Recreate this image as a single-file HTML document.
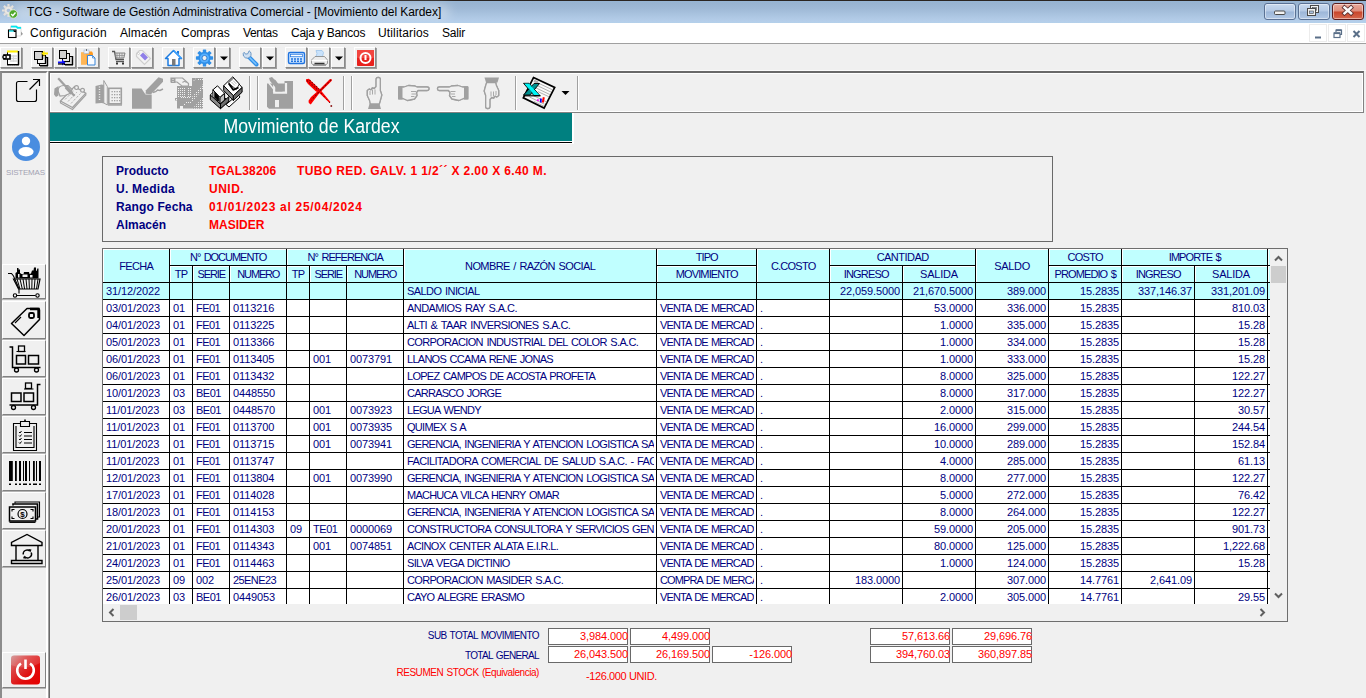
<!DOCTYPE html>
<html lang="es">
<head>
<meta charset="utf-8">
<title>TCG - Software de Gestión Administrativa Comercial - [Movimiento del Kardex]</title>
<style>
*{box-sizing:border-box;margin:0;padding:0}
html,body{width:1366px;height:698px;overflow:hidden;background:#f0f0f0;font-family:"Liberation Sans",sans-serif}
.abs,.abs>*{position:absolute}
#app{position:relative;width:1366px;height:698px;overflow:hidden;background:#f0f0f0}
#app>*{position:absolute}
/* title bar */
#title{left:0;top:0;width:1366px;height:23px;background:linear-gradient(#97b6d6 0,#98b3d0 8%,#9fb9d6 35%,#abc5e1 65%,#b5ceea 92%,#b3d0ea 100%);border-top:1px solid #2b2420}
#title .glow{position:absolute;left:14px;top:3px;width:436px;height:15px;background:#fff;opacity:.3;filter:blur(5px);border-radius:8px}
#title .txt{position:absolute;left:27px;top:4px;font-size:12px;line-height:14px;color:#000;white-space:nowrap}
.wb{position:absolute;top:2px;height:17px;width:32px;border:1px solid #5a7194;border-radius:3px;background:linear-gradient(#c8d9ee 0,#b4c9e5 48%,#9cb6d8 52%,#b3c9e6 100%);box-shadow:inset 0 0 0 1px rgba(255,255,255,.45)}
.wb.close{background:linear-gradient(#e9a99b 0,#dd8c7a 48%,#c8452a 52%,#d6694f 100%);border-color:#5a1d1d}
/* menu */
#menu{left:0;top:23px;width:1366px;height:20px;background:#fff}
#menu span{position:absolute;top:3px;font-size:12px;line-height:14px;color:#000;white-space:nowrap}
#menuline{left:0;top:43px;width:1366px;height:1px;background:#a0a0a0}
.mdi{position:absolute;top:1px;width:18px;height:18px;border:1px solid #ececec;background:#fff}
.mdi svg{position:absolute;left:0;top:0}
/* toolbar 1 */
.tb{position:absolute;top:47px;height:21px;width:22px;background:#f0f0f0;border:1px solid;border-color:#fff #8a8a8a #8a8a8a #fff;box-shadow:1px 1px 0 #a0a0a0}
.tb.dd{width:14px}
.tb svg{position:absolute;left:0;top:0}
/* frames */
#lp{left:0;top:71px;width:48px;height:640px;border:solid;border-width:2px 2px 0 2px;border-color:#828282 #fff #fff #8c8c8c}
#wl{left:0;top:70px;width:1366px;height:1px;background:#fbfbfb}
#vl{left:48px;top:71px;width:2px;height:640px;background:#696969;border-left:1px solid #a0a0a0}
#tf{left:50px;top:71px;width:1314px;height:42px;border:1px solid #828282;border-top:2px solid #696969;border-left:0;box-shadow:inset 1px 1px 0 #fff,inset -1px -1px 0 #fff}
#banner{left:50px;top:113px;width:522px;height:28px;background:#008080;box-shadow:0 1px 0 #fff,0 2px 0 #000,0 3px 0 #fff,2px 0 0 #fff,2px 3px 0 #fff;color:#fff;font-size:20px;line-height:28px;text-align:center;white-space:nowrap}
#banner span{display:inline-block;transform:scaleX(.885);transform-origin:50% 50%;position:relative;top:-1px}
#info{left:102px;top:156px;width:951px;height:86px;border:1px solid #696969}
#info b{position:absolute;font-size:12px;line-height:14px;white-space:nowrap;font-weight:bold}
#info .k{left:13px;color:#000080}
#info .v{left:106px;color:#f00}
#sis{left:6px;top:168px;width:40px;font-size:8px;line-height:10px;color:#a3a3b3;white-space:nowrap;letter-spacing:-.2px}
.lb{left:2px;width:44px;border:1px solid;border-color:#fff #828282 #828282 #fff;box-shadow:0 1px 0 #b4b4b4}
.lb svg{position:absolute;left:0;top:0}
/* grid */
#grid{left:102px;top:248px;width:1186px;height:374px;border:1px solid #6e6e6e;background:#f0f0f0}
#gv{position:absolute;left:0;top:0;width:1167px;height:355px;overflow:hidden;background:#fff}
#vs{position:absolute;left:1167px;top:0;width:17px;height:355px;background:#f0f0f0}
#hs{position:absolute;left:0;top:355px;width:1167px;height:17px;background:#f0f0f0}
#vs svg,#hs svg{position:absolute;left:0;top:0}
.row{position:absolute;left:0;width:1167px;height:17px}
.row.first .c{background:#c0ffff}
.c{position:absolute;top:0;height:17px;border-right:1px solid #000;border-bottom:1px solid #000;font-size:11px;line-height:16px;color:#000080;white-space:nowrap;overflow:hidden;padding:0 3px 0 3px;word-spacing:1.2px}
.c.l::after{content:"";position:absolute;right:0;top:0;width:2px;height:16px;background:#fff}
.row.first .c.l::after{background:#c0ffff}
.c.r{text-align:right;padding:0 2px 0 0}
.c.x{border-right:0;padding:0}
.h{position:absolute;background:#c0ffff;border-right:1px solid #000;border-bottom:1px solid #000;box-shadow:inset 1px 1px 0 #fff;font-size:11px;color:#000080;text-align:center;white-space:nowrap;overflow:hidden;word-spacing:1.2px}
.tl{width:159px;text-align:right;font-size:10px;line-height:12px;white-space:nowrap;word-spacing:1px}
.tv{width:80px;height:17px;box-shadow:inset 0 0 0 1px #696969;background:#fff;color:#f00;font-size:11px;line-height:14px;text-align:right;padding:1px 0 1px 1px;white-space:nowrap;letter-spacing:-.1px}
</style>
</head>
<body>
<div id="app">
<!-- ===== title bar ===== -->
<div id="title"><div class="glow"></div>
<svg style="position:absolute;left:2px;top:2px" width="17" height="18" viewBox="0 0 17 18">
<g fill="#e9e6e2" stroke="#c9c5c0" stroke-width=".6">
<circle cx="6.5" cy="7.5" r="4.2"/>
<g stroke="#e4e0dc" stroke-width="2.2" stroke-linecap="butt">
<path d="M6.5 1v2.6M6.5 11.4V14M0 7.5h2.6M10.4 7.5H13M1.9 2.9l1.9 1.9M9.2 10.2l1.9 1.9M1.9 12.1l1.9-1.9M9.2 4.8l1.9-1.9"/>
</g>
</g>
<circle cx="6.5" cy="7.5" r="1.8" fill="#a9bfdc"/>
<circle cx="11.300" cy="11" r="4.200" fill="#4ea82a" stroke="#e8f3e0" stroke-width=".700"/>
<path d="M9.200 11.100l1.600 1.700 2.700-3.300" fill="none" stroke="#fff" stroke-width="1.4"/>
</svg>
<div class="txt" style="letter-spacing:-.07px">TCG - Software de Gestión Administrativa Comercial - [Movimiento del Kardex]</div>
<div class="wb" style="left:1264px"><svg width="30" height="15"><rect x="9.500" y="7" width="10.500" height="3.500" rx="1" fill="#f2f2f2" stroke="#4a4a4a"/></svg></div>
<div class="wb" style="left:1298px"><svg width="30" height="15"><rect x="11.500" y="1.500" width="8" height="7" fill="#f2f2f2" stroke="#4a4a4a"/><rect x="13.500" y="3.500" width="4" height="3" fill="#a9c0de" stroke="#4a4a4a" stroke-width=".600"/><rect x="8.500" y="4.500" width="8" height="7" fill="#f2f2f2" stroke="#4a4a4a"/><rect x="10.500" y="7" width="4" height="2.500" fill="#a9c0de" stroke="#4a4a4a" stroke-width=".600"/></svg></div>
<div class="wb close" style="left:1332px"><svg width="30" height="15"><path d="M11.500 3.500l6.500 5.800M18 3.500l-6.500 5.800" stroke="#5a3030" stroke-width="4.200" stroke-linecap="square"/><path d="M11.500 3.500l6.500 5.800M18 3.500l-6.500 5.800" stroke="#fafafa" stroke-width="2.500" stroke-linecap="square"/></svg></div>
</div>
<!-- ===== menu bar ===== -->
<div id="menu">
<svg style="position:absolute;left:7px;top:2px" width="18" height="14" viewBox="0 0 18 14">
<path d="M3.500 1h6l1 1h3.500v9H3.500z" fill="#fff" stroke="#d4d4d4" stroke-width=".800"/>
<path d="M4 1.700h5.500l1 1.200h3.500" fill="none" stroke="#00e8f0" stroke-width="1.700"/>
<path d="M14 6.500l2 2.500-2 1.500z" fill="#9a9a9a"/>
<rect x="1.500" y="5" width="7.500" height="7.500" fill="#fff" stroke="#000" stroke-width="1.100"/>
<path d="M2 6h5" stroke="#00dce8" stroke-width="1.300"/><path d="M7 5v1.500h2" fill="none" stroke="#000" stroke-width="1"/>
</svg>
<span style="left:30px;letter-spacing:.21px">Configuración</span>
<span style="left:120px;letter-spacing:.1px">Almacén</span>
<span style="left:181px">Compras</span>
<span style="left:243px;letter-spacing:-.35px">Ventas</span>
<span style="left:291px;letter-spacing:-.24px">Caja y Bancos</span>
<span style="left:378px;letter-spacing:.15px">Utilitarios</span>
<span style="left:442px;letter-spacing:-.2px">Salir</span>
<div class="mdi" style="left:1309px"><svg width="17" height="17"><path d="M5 12.5h6" stroke="#5a6f88" stroke-width="2"/></svg></div>
<div class="mdi" style="left:1328px"><svg width="17" height="17"><path d="M7 7V5h5.5v4.5H11" fill="none" stroke="#5a6f88" stroke-width="1.2"/><path d="M7 5.2h5.5" stroke="#5a6f88" stroke-width="1.8"/><rect x="5" y="8" width="6" height="4.5" fill="none" stroke="#5a6f88" stroke-width="1.2"/><path d="M5 8.2h6" stroke="#5a6f88" stroke-width="1.8"/></svg></div>
<div class="mdi" style="left:1347px"><svg width="17" height="17"><path d="M5.5 6l6 6M11.5 6l-6 6" stroke="#5a6f88" stroke-width="2"/></svg></div>
</div>
<div id="menuline"></div>
<!-- ===== toolbar 1 ===== -->
<div class="tb" style="left:0px"><svg width="21" height="20" viewBox="0 0 21 20">
<rect x="6.5" y="3.5" width="11" height="13" fill="#fff" stroke="#000"/><path d="M6 3.5h11" stroke="#ffee00" stroke-width="2"/><path d="M17.5 3v14M7 16.8h11" stroke="#000" stroke-width="1.4"/>
<path d="M9 8h7M9 10.5h7M9 13h7" stroke="#d8d8d8" stroke-width="1.4"/><path d="M12.5 7v7" stroke="#d8d8d8"/>
<rect x="3" y="7" width="6" height="4" fill="#fff" stroke="#000" stroke-width="1.6"/><circle cx="3.6" cy="9" r="1.7" fill="#fff" stroke="#000" stroke-width="1.3"/>
<path d="M6 17.5h10" stroke="#888" stroke-dasharray="1 1"/></svg></div>
<div class="tb" style="left:31px"><svg width="21" height="20" viewBox="0 0 21 20">
<rect x="7.5" y="9.5" width="8" height="8" fill="#e8e8e8" stroke="#000"/><rect x="5.5" y="7.5" width="8" height="8" fill="#f4f4f4" stroke="#000"/><rect x="2.5" y="3.5" width="8" height="8" fill="#d4d4d4" stroke="#000"/>
<path d="M15.5 9v9M8 17.8h8M13.5 8v7.5M10.5 4v7" stroke="#000" stroke-width="1.4"/>
<path d="M16 5.5h-5" stroke="#ffe800" stroke-width="2"/><path d="M12.5 2.5l-3 3 3 3z" fill="#ffe800"/></svg></div>
<div class="tb" style="left:54px"><svg width="21" height="20" viewBox="0 0 21 20">
<rect x="9.5" y="8.5" width="8" height="8" fill="#d8d8d8" stroke="#000"/><rect x="7.5" y="5.5" width="7" height="8" fill="#e8e8e8" stroke="#000"/><rect x="4.500" y="2.500" width="7" height="8" fill="#cfcfcf" stroke="#000"/>
<path d="M17.5 8v9M10 16.800h8" stroke="#000" stroke-width="1.400"/>
<path d="M3 14.500h5" stroke="#1010ff" stroke-width="2"/><path d="M7 11.500l3.500 3-3.500 3z" fill="#1010ff"/><path d="M3 16h6" stroke="#000" stroke-width="1.200"/></svg></div>
<div class="tb" style="left:77px"><svg width="21" height="20" viewBox="0 0 21 20">
<path d="M3 4.500h11v12H3z" fill="#ffa83a"/><path d="M3 4.500h5v12H3z" fill="#ffb656"/><path d="M11 3.500h3l1 2v2h-4z" fill="#ff9a1f"/>
<rect x="6" y="2" width="5" height="3.500" fill="#eef3fb" stroke="#9fb6d8" stroke-width=".600"/><path d="M8.500 1v2" stroke="#777"/>
<path d="M9.500 7.500h5l2.500 2.500v7h-7.500z" fill="#fafcff" stroke="#3a86d8"/><path d="M14.500 7.500v2.500h2.500" fill="none" stroke="#3a86d8" stroke-width=".800"/></svg></div>
<div class="tb" style="left:108px"><svg width="21" height="20" viewBox="0 0 21 20">
<path d="M3 3.500h2.500l1.500 8h8" fill="none" stroke="#555" stroke-width="1.300"/><path d="M6 5h10l-1.200 5H7z" fill="#e2e2e2" stroke="#777" stroke-width=".900"/>
<path d="M8 5v5M10.500 5v5M13 5v5M6.500 7.500h9" stroke="#8a8a8a" stroke-width=".700"/><path d="M7 13.500h8" stroke="#555" stroke-width="1.300"/>
<rect x="7" y="14.500" width="2" height="2" fill="#333"/><rect x="13" y="14.500" width="2" height="2" fill="#333"/></svg></div>
<div class="tb" style="left:131px"><svg width="21" height="20" viewBox="0 0 21 20">
<path d="M4.500 5.500l3-3h3l8 8-6 6-8-8z" fill="#f4f4f4" stroke="#cfcfcf" stroke-width="1.200"/><path d="M8 7.500l3-3 5 5-3 3z" fill="#8f7fe8"/><circle cx="6.500" cy="5.500" r="1" fill="#fff" stroke="#bbb" stroke-width=".600"/></svg></div>
<div class="tb" style="left:162px"><svg width="21" height="20" viewBox="0 0 21 20">
<path d="M10.500 2.500l8 8h-2.500v7h-11v-7H2.500z" fill="#fdfdff" stroke="#1c7be0" stroke-width="1.500" stroke-linejoin="round"/><path d="M14 3h2v3.500l-2-2z" fill="#1c7be0"/>
<rect x="9" y="11" width="3.500" height="6.500" fill="#7a7a7a"/><path d="M10.500 2.500l8 8" stroke="#3aa0ff" stroke-width="1.500"/></svg></div>
<div class="tb" style="left:193px"><svg width="21" height="20" viewBox="0 0 21 20">
<g transform="translate(10.500 10)"><g fill="#2f8fe8"><circle r="6.200"/><g id="gt"><rect x="-1.700" y="-8.600" width="3.400" height="3.400" rx=".6"/><rect x="-1.700" y="5.200" width="3.400" height="3.400" rx=".6"/></g><use href="#gt" transform="rotate(45)"/><use href="#gt" transform="rotate(90)"/><use href="#gt" transform="rotate(135)"/></g>
<circle r="4.600" fill="#57b0ff"/><circle r="2.500" fill="#f0f0f0" stroke="#1f6fc8" stroke-width=".800"/></g></svg></div>
<div class="tb dd" style="left:216px"><svg width="13" height="20"><path d="M3 8.500h8l-4 4z" fill="#000"/></svg></div>
<div class="tb" style="left:239px"><svg width="21" height="20" viewBox="0 0 21 20">
<path d="M8 8l8.500 8.500" stroke="#2f8fe8" stroke-width="4" stroke-linecap="round"/><path d="M8.500 8.500l7.500 7.500" stroke="#7cc4ff" stroke-width="1.500" stroke-linecap="round"/>
<path d="M3.200 5.500a4 4 0 0 0 6.800 3.500a4 4 0 0 0-.8-6.200l-1.500 3-2.200.3-1.300-1.800z" fill="#cfe0f2" stroke="#5f8fc0" stroke-width=".900"/></svg></div>
<div class="tb dd" style="left:262px"><svg width="13" height="20"><path d="M3 8.500h8l-4 4z" fill="#000"/></svg></div>
<div class="tb" style="left:285px"><svg width="21" height="20" viewBox="0 0 21 20">
<rect x="2.500" y="4.500" width="16" height="11" rx="1.500" fill="#cfe6ff" stroke="#1f73e0" stroke-width="1.400"/><rect x="4.500" y="6.300" width="12" height="2.400" fill="#fff" stroke="#1f73e0" stroke-width=".700"/>
<path d="M5 11h11M5 13.300h11" stroke="#1f73e0" stroke-width="1.500" stroke-dasharray="2 1"/></svg></div>
<div class="tb" style="left:308px"><svg width="21" height="20" viewBox="0 0 21 20">
<path d="M7 2.500h6l1.500 2-1.500 6H6.500l1.500-5z" fill="#c9e2fb" stroke="#9cc3ea" stroke-width=".800"/>
<path d="M2.500 12l3.500-3.500h9.500l3 3.500v3.500l-2 1.500h-12l-2-1.500z" fill="#ececec" stroke="#8c8c8c" stroke-width=".900"/><path d="M2.500 12.500h16" stroke="#fff" stroke-width="1.200"/>
<path d="M5.500 15.500h10" stroke="#333" stroke-width="1.500"/><path d="M4 17l13 0" stroke="#777" stroke-width="1"/></svg></div>
<div class="tb dd" style="left:331px"><svg width="13" height="20"><path d="M3 8.500h8l-4 4z" fill="#000"/></svg></div>
<div class="tb" style="left:354px"><svg width="21" height="20" viewBox="0 0 21 20">
<rect x="2" y="2" width="17" height="16" rx="1" fill="#e8211d"/><rect x="2" y="2" width="17" height="8" rx="1" fill="#f2453f"/>
<circle cx="10.500" cy="10" r="5" fill="none" stroke="#fff" stroke-width="2"/><path d="M10.500 7v5" stroke="#fff" stroke-width="2"/></svg></div>
<!-- ===== frames ===== -->
<div id="wl"></div><div id="lp"></div><div id="vl"></div>
<div id="tf"></div>
<div id="banner"><span>Movimiento de Kardex</span></div>
<!-- ===== info box ===== -->
<div id="info">
<b class="k" style="top:7px">Producto</b><b class="v" style="top:7px;letter-spacing:.15px">TGAL38206</b><b class="v" style="top:7px;left:194px;letter-spacing:.38px">TUBO RED. GALV. 1 1/2´´ X 2.00 X 6.40 M.</b>
<b class="k" style="top:25px;letter-spacing:.25px">U. Medida</b><b class="v" style="top:25px;letter-spacing:.5px">UNID.</b>
<b class="k" style="top:43px;letter-spacing:.12px">Rango Fecha</b><b class="v" style="top:43px;letter-spacing:.7px">01/01/2023 al 25/04/2024</b>
<b class="k" style="top:61px">Almacén</b><b class="v" style="top:61px">MASIDER</b>
</div>
<!-- ===== left panel ===== -->
<svg style="left:14px;top:77px" width="28" height="28" viewBox="0 0 28 28"><path d="M13.500 4.500H4.500q-2 0-2 2v16q0 2 2 2h16q2 0 2-2v-10" fill="none" stroke="#000" stroke-width="1.150"/><path d="M15.500 12.500l10-10M19 2.500h6.500v6.500" fill="none" stroke="#000" stroke-width="1.150"/></svg>
<svg style="left:11px;top:132px" width="30" height="30" viewBox="0 0 30 30"><circle cx="15" cy="15" r="14" fill="#4a8de0"/><circle cx="15" cy="9" r="4.200" fill="#fff"/><ellipse cx="15" cy="19.700" rx="7.600" ry="4.700" fill="#fff"/></svg>
<div id="sis">SISTEMAS</div>
<div class="lb" style="top:264px;height:35px"><svg width="42" height="33" viewBox="0 0 42 33">
<g fill="none" stroke="#000" stroke-width="1.100"><path d="M5 8.500h3.500l2 2.500 5.500 12.500"/><path d="M10.500 14h26.500l-2 10h-19.500z" stroke-width="1.200"/>
<path d="M14 14l3 10M17 14l2.300 10M20 14l1.600 10M23 14l1 10M26 14l.4 10M29 14l-.2 10M32 14l-.8 10M35 14l-1.500 10" stroke-width="1"/>
<path d="M16 23.500v5M13.500 30.500h19"/><circle cx="12" cy="30.500" r="1.700"/><circle cx="34.500" cy="30.500" r="1.700"/></g>
<path d="M12.500 13.500V8l1.500-1V3h1.500v1.500h1.500V8l1.500 1h2l.5-2h5l.5 2 1.500-.5 1-3h1.500l.5-3H33v3l.8.500.5-2.500h1.200v10z" fill="#000"/><path d="M19.500 9.500h5v2.500h-5zM27 10h2.500v2.500H27zM15 9h1.500v3.500H15z" fill="#f0f0f0"/></svg></div>
<div class="lb" style="top:301px;height:38px"><svg width="42" height="36" viewBox="0 0 42 36">
<g fill="none" stroke="#000" stroke-width="1.500" stroke-linejoin="round"><path d="M8.500 21.500L24 6.500h11.500l1 1.500v9.500L21 33.500z"/><rect x="26" y="11" width="5" height="5" rx="1.500" stroke-width="1.800"/><path d="M12 21l6-6" stroke-width="1.100"/></g><path d="M27 7h8.500v9" fill="none" stroke="#000" stroke-width="2.400"/></svg></div>
<div class="lb" style="top:340px;height:37px"><svg width="42" height="35" viewBox="0 0 42 35">
<g fill="none" stroke="#000" stroke-width="1.500"><path d="M6.500 6h3v20.500h28"/><rect x="13.500" y="14.500" width="9" height="8.500"/><rect x="25.500" y="14.500" width="10" height="8.500"/><rect x="15.500" y="5" width="6" height="5.500" stroke-width="1.300"/><path d="M13.500 10.500h9" stroke-width="1"/>
<circle cx="13.500" cy="29" r="2" stroke-width="1.300"/><circle cx="33.500" cy="29" r="2" stroke-width="1.300"/></g></svg></div>
<div class="lb" style="top:378px;height:37px"><svg width="42" height="35" viewBox="0 0 42 35">
<g fill="none" stroke="#000" stroke-width="1.500"><path d="M37.500 5.500h-3v20.500h-28"/><rect x="8.500" y="14" width="9.500" height="8.500"/><rect x="21" y="14" width="9.500" height="8.500"/><rect x="22.500" y="4" width="6" height="5.500" stroke-width="1.300"/><path d="M21 10h9.500" stroke-width="1"/>
<circle cx="10.500" cy="28.500" r="2" stroke-width="1.300"/><circle cx="30.500" cy="28.500" r="2" stroke-width="1.300"/></g></svg></div>
<div class="lb" style="top:416px;height:37px"><svg width="42" height="35" viewBox="0 0 42 35">
<g fill="none" stroke="#000" stroke-width="1.100"><path d="M17 6.500h-6.500v27h23v-27H27"/><path d="M13 9v21.500h18V9"/><path d="M17.500 4.500h9v5h-9z"/><path d="M22 2.500v2.500" stroke-width="1.600"/>
<path d="M21 15.500h8M21 19h8M21 22.500h8M21 26h8" stroke-width="1.200"/><path d="M16 15l1 1 1.500-2M16 18.500l1 1 1.500-2M16 22l1 1 1.500-2M16 25.500l1 1 1.500-2" stroke-width="1"/></g></svg></div>
<div class="lb" style="top:454px;height:37px"><svg width="42" height="35" viewBox="0 0 42 35">
<g fill="#000"><rect x="6" y="6" width="3.800" height="20"/><rect x="12" y="6" width="1.800" height="20"/><rect x="16" y="6" width="2" height="20"/><rect x="20" y="6" width="1" height="20"/><rect x="22" y="6" width="2" height="20"/><rect x="26" y="6" width="1" height="20"/><rect x="30" y="6" width="1.800" height="20"/><rect x="33" y="6" width="1" height="20"/><rect x="36" y="6" width="2" height="20"/>
<rect x="6" y="28.500" width="2" height="1.500"/><rect x="12" y="28.500" width="2" height="1.500"/><rect x="16" y="28.500" width="2" height="1.500"/><rect x="20" y="28.500" width="4" height="1.500"/><rect x="26" y="28.500" width="2" height="1.500"/><rect x="30" y="28.500" width="4" height="1.500"/><rect x="36" y="28.500" width="2" height="1.500"/></g></svg></div>
<div class="lb" style="top:492px;height:37px"><svg width="42" height="35" viewBox="0 0 42 35">
<g fill="none" stroke="#000"><path d="M12 10.500V9h24.500v15H35" stroke-width="1.100"/><path d="M10 12.500V11h24.500v15H33" stroke-width="1.600"/><rect x="6.500" y="14" width="26" height="14" stroke-width="1.500"/><path d="M6.500 29.300h26" stroke-width="1.300"/>
<circle cx="19.500" cy="21" r="4.500" stroke-width="1.200"/><path d="M9 18.500v-2h2.500M27.500 16.500H30v2M30 23.500v2h-2.500M11.500 25.500H9v-2" stroke-width="1.100"/></g>
<text x="19.500" y="24" font-size="8" font-weight="bold" text-anchor="middle" font-family="Liberation Sans,sans-serif" fill="#000">$</text></svg></div>
<div class="lb" style="top:530px;height:37px"><svg width="42" height="35" viewBox="0 0 42 35">
<g fill="none" stroke="#000" stroke-width="1.400" stroke-linejoin="miter"><path d="M8.500 14.500v-3L24 3.500l15 8v3z"/><path d="M13 15v14M35 15v14"/><path d="M8.500 29.500h30.500v3H8.500z"/>
<path d="M20.200 23.500a4 4 0 0 1 6.500-3.600" stroke-width="1.400"/><path d="M28.300 21.500a4 4 0 0 1-6.500 4.300" stroke-width="1.400"/></g><path d="M25.300 18l3.200.4-1.200 3z" fill="#000"/><path d="M23.200 27.800l-3.200-.5 1.300-2.900z" fill="#000"/></svg></div>
<div class="lb" style="top:652px;height:36px"><svg width="42" height="34" viewBox="0 0 42 34">
<defs><linearGradient id="pg" x1="0" y1="0" x2="1" y2="1"><stop offset="0" stop-color="#cf8f8f"/><stop offset=".3" stop-color="#dc4040"/><stop offset=".65" stop-color="#e00c0c"/><stop offset="1" stop-color="#e60000"/></linearGradient></defs>
<g transform="translate(-1 0)"><rect x="9" y="2.500" width="29" height="29" rx="3" fill="url(#pg)"/><path d="M9 12q14 6 29-2v-5q0-2.500-3-2.500H12q-3 0-3 2.500z" fill="#fff" opacity=".13"/>
<path d="M19 10.500a8.300 8.300 0 1 0 9 0" fill="none" stroke="#fff" stroke-width="2.600"/><path d="M23.500 6.500v9.500" stroke="#fff" stroke-width="2.600"/></g></svg></div>
<!-- ===== toolbar 2 icons ===== -->
<svg id="t2" style="left:50px;top:73px" width="540" height="39" viewBox="50 73 540 39">
<defs>
<pattern id="dots" width="2" height="2" patternUnits="userSpaceOnUse"><rect width="2" height="2" fill="#a0a0a0"/><rect width="1" height="1" fill="#f0f0f0"/></pattern>
<pattern id="hat" width="3" height="3" patternUnits="userSpaceOnUse"><rect width="3" height="3" fill="#f0f0f0"/><path d="M0 3L3 0M-1 1L1-1M2 4l2-2" stroke="#a0a0a0" stroke-width="1"/></pattern>
</defs>
<!-- 1 notepad + hand -->
<g stroke="#a0a0a0" fill="#f0f0f0" stroke-width="1.200">
<path d="M60.500 101L74.500 86.500 85.800 93.200 72.500 107.500z"/><path d="M60.500 101v2l12 6.500 13.300-14.500v-1.800" fill="none"/>
<path d="M65 99.500l9-9M68 101.500l9-9.500M71 103.500l9.500-10" stroke-width=".800" stroke-dasharray="2.500 1.500"/>
<circle cx="76.500" cy="87.600" r="1.900"/><circle cx="82.500" cy="90.300" r="1.900"/>
<path d="M58 91c0-4 3-5.500 6-5.500h4l4 4-1 3.500-6 2.500-5 .5z"/>
</g>
<path d="M54.500 88.500l4-2.500v9.500l-2.500 1.500-2-2.500z" fill="#a0a0a0"/>
<path d="M58.200 78.200L74.500 96" stroke="#a0a0a0" stroke-width="2.200"/><path d="M66 87l6 6.500" stroke="#a0a0a0" stroke-width="3.400"/>
<!-- 2 book -->
<g>
<path d="M95.500 86l6-1.500 5 1v18.500l-5-1-6 .5z" fill="#a0a0a0"/><path d="M99.500 86.500v15" stroke="#f0f0f0" stroke-width="1.400" stroke-dasharray="1 1.500"/>
<path d="M103.800 80.500l3.500 6v18.500l-3.500-2z" fill="#f0f0f0" stroke="#a0a0a0" stroke-width="1"/>
<rect x="108.800" y="88.300" width="12.500" height="15.500" fill="#f0f0f0" stroke="#a0a0a0" stroke-width="1.600"/><path d="M108 105h14" stroke="#a0a0a0" stroke-width="1.400"/>
<g fill="#a0a0a0"><rect x="111.500" y="91" width="1.300" height="1.300"/><rect x="114" y="91" width="1.300" height="1.300"/><rect x="116.500" y="91" width="1.300" height="1.300"/><rect x="119" y="91" width="1.300" height="1.300"/>
<rect x="111.500" y="94" width="1.300" height="1.300"/><rect x="114" y="94" width="1.300" height="1.300"/><rect x="116.500" y="94" width="1.300" height="1.300"/><rect x="119" y="94" width="1.300" height="1.300"/>
<rect x="111.500" y="97" width="1.300" height="1.300"/><rect x="114" y="97" width="1.300" height="1.300"/><rect x="116.500" y="97" width="1.300" height="1.300"/><rect x="119" y="97" width="1.300" height="1.300"/>
<rect x="111.500" y="100" width="1.300" height="1.300"/><rect x="114" y="100" width="1.300" height="1.300"/><rect x="116.500" y="100" width="1.300" height="1.300"/><rect x="119" y="100" width="1.300" height="1.300"/></g>
</g>
<!-- 3 square + pen -->
<path d="M132 88.500h9.500l4 6h6.200v14.200H132z" fill="#a0a0a0"/><path d="M158.500 77.300l4.500 1.500v3l-12 12.500-5.500-.5.500-3.500z" fill="#a0a0a0"/><path d="M153 92.500l3-1 1.500-1.500 2.500.5 3-1.500" fill="none" stroke="#a0a0a0" stroke-width="1.400"/>
<!-- 4 bin + hand -->
<path d="M171 78h11.500l6 5.500v2.500h-6.500l-5-4h-6z" fill="#f0f0f0" stroke="#a0a0a0" stroke-width="1.200"/><path d="M171 78h4.500v5H171z" fill="#a0a0a0"/><rect x="172.500" y="79" width="1" height="1" fill="#f0f0f0"/><rect x="172.500" y="81" width="1" height="1" fill="#f0f0f0"/>
<path d="M182.500 82.500q2-2 4 0" fill="none" stroke="#a0a0a0" stroke-width="1.100"/>
<path d="M177 86h15v22.500h-9v-2.500h-3v2.500h-3v-8h-2v-2.500h2z" fill="#a0a0a0"/>
<rect x="178" y="87" width="13" height="10" fill="url(#dots)"/><path d="M181.500 87v10M186.500 87v10" stroke="#a0a0a0"/>
<path d="M181 97.500h9M186 102.500h5" stroke="#f0f0f0" stroke-width="1" stroke-dasharray="1 1"/><rect x="176" y="99" width="1" height="1" fill="#f0f0f0"/><rect x="184" y="104" width="1" height="1" fill="#f0f0f0"/>
<path d="M192 78h11v30.500h-11z" fill="#a0a0a0"/>
<path d="M192 97l11-13v5L192 102z" fill="url(#dots)"/><path d="M203 97.500v11h-10.500z" fill="url(#dots)"/>
<path d="M193.500 81l2-2M198 79.500h5" stroke="#f0f0f0" stroke-width="1" stroke-dasharray="1 1"/>
<!-- 5 computer + printer -->
<g stroke="#000" stroke-width="1" stroke-linejoin="round">
<path d="M226 104.500l3 2.500 11-10-2-2.500z" fill="#fff"/>
<path d="M232.800 76.800l9.300 10.700-8.800 8.200-9.600-10z" fill="#fff"/>
<path d="M223.700 85.700l9.600 10v4.800l-9.600-10z" fill="#8a8a8a"/><path d="M233.300 95.700l8.800-8.200v4.700l-8.800 8.300z" fill="#6e6e6e"/>
<path d="M228.300 83l5.200-5 5.800 6-3 5.500z" fill="#fff" stroke-width=".800"/><path d="M228.800 83.500l4.400 6.300 5.300-2.300" fill="none" stroke-width="1.900"/>
<path d="M231.500 82l3.500 3.600M233 80.500l3.500 3.600" stroke="#9a9a9a" stroke-width=".700"/>
<path d="M210.300 95l4.500-4.500 14 10.500-8.300 7.500z" fill="#fff"/>
<path d="M210.300 95l10.200 9v4.700l-10.200-9z" fill="#8a8a8a"/><path d="M220.500 104l8.300-7.300v4.500l-8.300 7.500z" fill="#6e6e6e"/>
<path d="M217.500 85.800l7.100 7.500-4.600 4.200-7.100-7.700z" fill="#fff"/>
<path d="M212.900 89.800l7.100 7.700v6.500l-7.100-7.500z" fill="#fff"/><path d="M214.800 92.300l3.600 4v5l-3.600-4z" fill="#000"/>
<path d="M220 97.500l4.600-4.200v6.700l-4.600 4z" fill="#bdbdbd"/>
</g>
<!-- separators -->
<g><path d="M249.500 76v34M257.500 76v34M343.500 76v34M351.500 76v34M515.500 76v34M577.500 76v34" stroke="#a0a0a0"/><path d="M250.500 76v34M258.500 76v34M344.500 76v34M352.500 76v34M516.500 76v34M578.500 76v34" stroke="#fff"/></g>
<!-- 6 floppy -->
<path d="M267 83.500h17.500V81H293v27.700h-24l-2-2z" fill="#a0a0a0"/>
<path d="M274.200 84v8.600h11.800V83" fill="none" stroke="#f0f0f0" stroke-width="2.200"/>
<path d="M269 78l3-1 2.500 2.500 1 .5 7 9.500v2h-7l.5-3.500-6-7z" fill="#a0a0a0"/><path d="M268.800 83l5.200 6.500-.5 2.500" fill="none" stroke="#f0f0f0" stroke-width="1.300"/>
<rect x="275" y="100" width="4" height="7.200" fill="#f0f0f0"/>
<!-- 7 red X -->
<path d="M306 79.200l2.800-.4 11.500 11 10.200 12.200-1.200.8-10.500-10.300-2.800-1-8-7.500-2-2.800z" fill="#f00"/>
<path d="M307 80.500l13 11.500M309.500 80l10.500 10" stroke="#800000" stroke-width="1.100" stroke-dasharray="1.500 1.500"/>
<path d="M331.800 79.200l-1.800-.2-10.500 10.500-8.500 7.500-2.500 3.800.3 2.200 2 1.600 2.200-3.100 6.500-8.500 12.300-12.300z" fill="#f00"/>
<path d="M331 79.800l-11 11-9 9.500" stroke="#800000" stroke-width="1.100" stroke-dasharray="1.500 2"/>
<path d="M321 93l9 10" stroke="#800000" stroke-width="1" stroke-dasharray="1.500 2.500"/>
<rect x="330.500" y="105.200" width="1.600" height="1.600" fill="#800000"/>
<!-- hands -->
<g fill="#f0f0f0" stroke="#a0a0a0" stroke-width="1.300" stroke-linejoin="round" style="filter:drop-shadow(.8px .8px 0 #a0a0a0)">
<path d="M378.500 77.500q1.800 0 1.800 2v11l1.500 4.500-1.500 5.500-1 3.500h-9l-.5-3-2.500-5.500v-5l2-1.500 1.500 1 1.500-2 2 .5 1.800-2V79.500q0-2 1.900-2z"/><path d="M370 91v4M372.500 89.500v5M375 89.500v5" stroke-width=".900"/>
<path d="M429 88.700q0 1.800-2 1.800h-9l-1.500 2 .5 3-2.500 3.500-7 1.500-4.500-2h-4V87h5l4.500-1.500 6.500.5 2 1h10q2 0 2 1.700z"/><path d="M411 91.500h5M411.500 94h4.500M411 96.500h3.500" stroke-width=".900"/>
<path d="M437.500 88.700q0 1.800 2 1.800h9l1.500 2-.5 3 2.500 3.500 7 1.500 4.500-2h4V87h-5L458 85.500l-6.500.5-2 1h-10q-2 0-2 1.700z"/><path d="M455.500 91.500h-5M455 94h-4.500M455.500 96.500H452" stroke-width=".900"/>
<path d="M487.500 108.500q-1.800 0-1.800-2v-11l-1.500-4.500 1.500-5.500 1-3h9l.5 2.500 2.500 5.500v5l-2 1.500-1.500-1-1.500 2-2-.5-1.800 2v7q0 2-1.900 2z"/><path d="M496 95v-4M493.500 96.500v-5M491 96.500v-5" stroke-width=".900"/>
</g>
<path d="M369.500 104h10l1.500 5h-13z" fill="#a0a0a0"/><path d="M398 86.500h4.500v13H398z" fill="#a0a0a0"/><path d="M464 86.500h4.500v13H464z" fill="#a0a0a0"/><path d="M484.500 77.500h14.500l-1.500 5h-11.500z" fill="#a0a0a0"/>
<!-- excel -->
<g>
<path d="M533.500 77.500l21.200 10-10.600 20.600-20.800-10.300z" fill="#fafafa" stroke="#000" stroke-width="1.700" stroke-linejoin="miter"/>
<path d="M536 82l16 7.600M535 84.500l16 7.600M534 87l16 7.600M538 91.600l11 5.200M531 94.500l16 7.600M529.500 97l15 7.200M534 101.500l10 4.800" stroke="#a8a8a8" stroke-width=".900"/>
<path d="M534.500 79.500l4 2-1 2.500-4-2z" fill="#b0b0b0"/>
<path d="M523.500 83.300h5.500l11 12.300h-6z" fill="#00f0f0" stroke="#000" stroke-width=".900" stroke-linejoin="round"/>
<path d="M539.500 83.500h-5.500l-10.500 11.500h6.500z" fill="#009090" stroke="#000" stroke-width=".900" stroke-linejoin="round"/>
<path d="M525 83.800h4l10 11.300h-4.500z" fill="#00f4f4"/>
<path d="M523.500 95.800h17" stroke="#000" stroke-width="1.200"/>
<rect x="537" y="99.300" width="1.800" height="1.800" fill="#f0f"/><path d="M540.800 98.500v4" stroke="#00f" stroke-width="1.800"/><path d="M543.800 97.300l-1 5.200" stroke="#f00" stroke-width="2"/>
</g>
<path d="M561.500 91h8l-4 4z" fill="#000"/>
</svg>

<div id="grid"><div id="gv">
<div class="h" style="left:0px;top:0px;width:67px;height:34px;line-height:35px;letter-spacing:-0.662px;text-indent:0.33px">FECHA</div>
<div class="h" style="left:67px;top:0px;width:117px;height:17px;line-height:16px;letter-spacing:-1.018px;text-indent:0.51px">N° DOCUMENTO</div>
<div class="h" style="left:67px;top:17px;width:23px;height:17px;line-height:16px;letter-spacing:-0.571px;text-indent:0.29px">TP</div>
<div class="h" style="left:90px;top:17px;width:37px;height:17px;line-height:16px;letter-spacing:-1.091px;text-indent:0.55px">SERIE</div>
<div class="h" style="left:127px;top:17px;width:57px;height:17px;line-height:16px;letter-spacing:-1.161px;text-indent:0.58px">NUMERO</div>
<div class="h" style="left:184px;top:0px;width:117px;height:17px;line-height:16px;letter-spacing:-0.944px;text-indent:0.47px">N° REFERENCIA</div>
<div class="h" style="left:184px;top:17px;width:23px;height:17px;line-height:16px;letter-spacing:-0.571px;text-indent:0.29px">TP</div>
<div class="h" style="left:207px;top:17px;width:37px;height:17px;line-height:16px;letter-spacing:-1.091px;text-indent:0.55px">SERIE</div>
<div class="h" style="left:244px;top:17px;width:57px;height:17px;line-height:16px;letter-spacing:-1.161px;text-indent:0.58px">NUMERO</div>
<div class="h" style="left:301px;top:0px;width:253px;height:34px;line-height:35px;letter-spacing:-0.612px;text-indent:0.31px">NOMBRE / RAZÓN SOCIAL</div>
<div class="h" style="left:554px;top:0px;width:100px;height:17px;line-height:16px;letter-spacing:-0.962px;text-indent:0.48px">TIPO</div>
<div class="h" style="left:554px;top:17px;width:100px;height:17px;line-height:16px;letter-spacing:-0.883px;text-indent:0.44px">MOVIMIENTO</div>
<div class="h" style="left:654px;top:0px;width:73px;height:34px;line-height:35px;letter-spacing:-0.756px;text-indent:0.38px">C.COSTO</div>
<div class="h" style="left:727px;top:0px;width:146px;height:17px;line-height:16px;letter-spacing:-0.537px;text-indent:0.27px">CANTIDAD</div>
<div class="h" style="left:727px;top:17px;width:73px;height:17px;line-height:16px;letter-spacing:-0.851px;text-indent:0.43px">INGRESO</div>
<div class="h" style="left:800px;top:17px;width:73px;height:17px;line-height:16px;letter-spacing:-0.205px;text-indent:0.1px">SALIDA</div>
<div class="h" style="left:873px;top:0px;width:73px;height:34px;line-height:35px;letter-spacing:-0.287px;text-indent:0.14px">SALDO</div>
<div class="h" style="left:946px;top:0px;width:73px;height:17px;line-height:16px;letter-spacing:-0.692px;text-indent:0.35px">COSTO</div>
<div class="h" style="left:946px;top:17px;width:73px;height:17px;line-height:16px;letter-spacing:-0.902px;text-indent:0.45px">PROMEDIO $</div>
<div class="h" style="left:1019px;top:0px;width:146px;height:17px;line-height:16px;letter-spacing:-0.928px;text-indent:0.46px">IMPORTE $</div>
<div class="h" style="left:1019px;top:17px;width:73px;height:17px;line-height:16px;letter-spacing:-0.851px;text-indent:0.43px">INGRESO</div>
<div class="h" style="left:1092px;top:17px;width:73px;height:17px;line-height:16px;letter-spacing:-0.205px;text-indent:0.1px">SALIDA</div>
<div class="h" style="left:1165px;top:0;width:2px;height:17px;border-right:0"></div>
<div class="h" style="left:1165px;top:17px;width:2px;height:17px;border-right:0"></div>
<div class="row first" style="top:34px">
<div class="c l" style="left:0px;width:67px;letter-spacing:-0.105px">31/12/2022</div>
<div class="c l" style="left:67px;width:23px"></div>
<div class="c l" style="left:90px;width:37px"></div>
<div class="c l" style="left:127px;width:57px"></div>
<div class="c l" style="left:184px;width:23px"></div>
<div class="c l" style="left:207px;width:37px"></div>
<div class="c l" style="left:244px;width:57px"></div>
<div class="c l" style="left:301px;width:253px;letter-spacing:-0.581px">SALDO INICIAL</div>
<div class="c l" style="left:554px;width:100px"></div>
<div class="c l" style="left:654px;width:73px"></div>
<div class="c r" style="left:727px;width:73px;letter-spacing:-0.106px">22,059.5000</div>
<div class="c r" style="left:800px;width:73px;letter-spacing:-0.106px">21,670.5000</div>
<div class="c r" style="left:873px;width:73px;letter-spacing:-0.109px">389.000</div>
<div class="c r" style="left:946px;width:73px;letter-spacing:-0.109px">15.2835</div>
<div class="c r" style="left:1019px;width:73px;letter-spacing:-0.105px">337,146.37</div>
<div class="c r" style="left:1092px;width:73px;letter-spacing:-0.105px">331,201.09</div>
<div class="c x" style="left:1165px;width:2px"></div>
</div>
<div class="row" style="top:51px">
<div class="c l" style="left:0px;width:67px;letter-spacing:-0.105px">03/01/2023</div>
<div class="c l" style="left:67px;width:23px;letter-spacing:-0.118px">01</div>
<div class="c l" style="left:90px;width:37px;letter-spacing:-0.573px">FE01</div>
<div class="c l" style="left:127px;width:57px;letter-spacing:-0.118px">0113216</div>
<div class="c l" style="left:184px;width:23px"></div>
<div class="c l" style="left:207px;width:37px"></div>
<div class="c l" style="left:244px;width:57px"></div>
<div class="c l" style="left:301px;width:253px;letter-spacing:-0.557px">ANDAMIOS RAY S.A.C.</div>
<div class="c l" style="left:554px;width:100px;letter-spacing:-0.885px">VENTA DE MERCADERIA</div>
<div class="c l" style="left:654px;width:73px;letter-spacing:-0.056px">.</div>
<div class="c r" style="left:727px;width:73px"></div>
<div class="c r" style="left:800px;width:73px;letter-spacing:-0.109px">53.0000</div>
<div class="c r" style="left:873px;width:73px;letter-spacing:-0.109px">336.000</div>
<div class="c r" style="left:946px;width:73px;letter-spacing:-0.109px">15.2835</div>
<div class="c r" style="left:1019px;width:73px"></div>
<div class="c r" style="left:1092px;width:73px;letter-spacing:-0.107px">810.03</div>
<div class="c x" style="left:1165px;width:2px"></div>
</div>
<div class="row" style="top:68px">
<div class="c l" style="left:0px;width:67px;letter-spacing:-0.105px">04/01/2023</div>
<div class="c l" style="left:67px;width:23px;letter-spacing:-0.118px">01</div>
<div class="c l" style="left:90px;width:37px;letter-spacing:-0.573px">FE01</div>
<div class="c l" style="left:127px;width:57px;letter-spacing:-0.118px">0113225</div>
<div class="c l" style="left:184px;width:23px"></div>
<div class="c l" style="left:207px;width:37px"></div>
<div class="c l" style="left:244px;width:57px"></div>
<div class="c l" style="left:301px;width:253px;letter-spacing:-0.63px">ALTI &amp; TAAR INVERSIONES S.A.C.</div>
<div class="c l" style="left:554px;width:100px;letter-spacing:-0.885px">VENTA DE MERCADERIA</div>
<div class="c l" style="left:654px;width:73px;letter-spacing:-0.056px">.</div>
<div class="c r" style="left:727px;width:73px"></div>
<div class="c r" style="left:800px;width:73px;letter-spacing:-0.107px">1.0000</div>
<div class="c r" style="left:873px;width:73px;letter-spacing:-0.109px">335.000</div>
<div class="c r" style="left:946px;width:73px;letter-spacing:-0.109px">15.2835</div>
<div class="c r" style="left:1019px;width:73px"></div>
<div class="c r" style="left:1092px;width:73px;letter-spacing:-0.105px">15.28</div>
<div class="c x" style="left:1165px;width:2px"></div>
</div>
<div class="row" style="top:85px">
<div class="c l" style="left:0px;width:67px;letter-spacing:-0.105px">05/01/2023</div>
<div class="c l" style="left:67px;width:23px;letter-spacing:-0.118px">01</div>
<div class="c l" style="left:90px;width:37px;letter-spacing:-0.573px">FE01</div>
<div class="c l" style="left:127px;width:57px;letter-spacing:-0.118px">0113366</div>
<div class="c l" style="left:184px;width:23px"></div>
<div class="c l" style="left:207px;width:37px"></div>
<div class="c l" style="left:244px;width:57px"></div>
<div class="c l" style="left:301px;width:253px;letter-spacing:-0.663px">CORPORACION INDUSTRIAL DEL COLOR S.A.C.</div>
<div class="c l" style="left:554px;width:100px;letter-spacing:-0.885px">VENTA DE MERCADERIA</div>
<div class="c l" style="left:654px;width:73px;letter-spacing:-0.056px">.</div>
<div class="c r" style="left:727px;width:73px"></div>
<div class="c r" style="left:800px;width:73px;letter-spacing:-0.107px">1.0000</div>
<div class="c r" style="left:873px;width:73px;letter-spacing:-0.109px">334.000</div>
<div class="c r" style="left:946px;width:73px;letter-spacing:-0.109px">15.2835</div>
<div class="c r" style="left:1019px;width:73px"></div>
<div class="c r" style="left:1092px;width:73px;letter-spacing:-0.105px">15.28</div>
<div class="c x" style="left:1165px;width:2px"></div>
</div>
<div class="row" style="top:102px">
<div class="c l" style="left:0px;width:67px;letter-spacing:-0.105px">06/01/2023</div>
<div class="c l" style="left:67px;width:23px;letter-spacing:-0.118px">01</div>
<div class="c l" style="left:90px;width:37px;letter-spacing:-0.573px">FE01</div>
<div class="c l" style="left:127px;width:57px;letter-spacing:-0.118px">0113405</div>
<div class="c l" style="left:184px;width:23px"></div>
<div class="c l" style="left:207px;width:37px;letter-spacing:-0.118px">001</div>
<div class="c l" style="left:244px;width:57px;letter-spacing:-0.118px">0073791</div>
<div class="c l" style="left:301px;width:253px;letter-spacing:-0.723px">LLANOS CCAMA RENE JONAS</div>
<div class="c l" style="left:554px;width:100px;letter-spacing:-0.885px">VENTA DE MERCADERIA</div>
<div class="c l" style="left:654px;width:73px;letter-spacing:-0.056px">.</div>
<div class="c r" style="left:727px;width:73px"></div>
<div class="c r" style="left:800px;width:73px;letter-spacing:-0.107px">1.0000</div>
<div class="c r" style="left:873px;width:73px;letter-spacing:-0.109px">333.000</div>
<div class="c r" style="left:946px;width:73px;letter-spacing:-0.109px">15.2835</div>
<div class="c r" style="left:1019px;width:73px"></div>
<div class="c r" style="left:1092px;width:73px;letter-spacing:-0.105px">15.28</div>
<div class="c x" style="left:1165px;width:2px"></div>
</div>
<div class="row" style="top:119px">
<div class="c l" style="left:0px;width:67px;letter-spacing:-0.105px">06/01/2023</div>
<div class="c l" style="left:67px;width:23px;letter-spacing:-0.118px">01</div>
<div class="c l" style="left:90px;width:37px;letter-spacing:-0.573px">FE01</div>
<div class="c l" style="left:127px;width:57px;letter-spacing:-0.118px">0113432</div>
<div class="c l" style="left:184px;width:23px"></div>
<div class="c l" style="left:207px;width:37px"></div>
<div class="c l" style="left:244px;width:57px"></div>
<div class="c l" style="left:301px;width:253px;letter-spacing:-0.741px">LOPEZ CAMPOS DE ACOSTA PROFETA</div>
<div class="c l" style="left:554px;width:100px;letter-spacing:-0.885px">VENTA DE MERCADERIA</div>
<div class="c l" style="left:654px;width:73px;letter-spacing:-0.056px">.</div>
<div class="c r" style="left:727px;width:73px"></div>
<div class="c r" style="left:800px;width:73px;letter-spacing:-0.107px">8.0000</div>
<div class="c r" style="left:873px;width:73px;letter-spacing:-0.109px">325.000</div>
<div class="c r" style="left:946px;width:73px;letter-spacing:-0.109px">15.2835</div>
<div class="c r" style="left:1019px;width:73px"></div>
<div class="c r" style="left:1092px;width:73px;letter-spacing:-0.107px">122.27</div>
<div class="c x" style="left:1165px;width:2px"></div>
</div>
<div class="row" style="top:136px">
<div class="c l" style="left:0px;width:67px;letter-spacing:-0.105px">10/01/2023</div>
<div class="c l" style="left:67px;width:23px;letter-spacing:-0.118px">03</div>
<div class="c l" style="left:90px;width:37px;letter-spacing:-0.477px">BE01</div>
<div class="c l" style="left:127px;width:57px;letter-spacing:-0.118px">0448550</div>
<div class="c l" style="left:184px;width:23px"></div>
<div class="c l" style="left:207px;width:37px"></div>
<div class="c l" style="left:244px;width:57px"></div>
<div class="c l" style="left:301px;width:253px;letter-spacing:-0.749px">CARRASCO JORGE</div>
<div class="c l" style="left:554px;width:100px;letter-spacing:-0.885px">VENTA DE MERCADERIA</div>
<div class="c l" style="left:654px;width:73px;letter-spacing:-0.056px">.</div>
<div class="c r" style="left:727px;width:73px"></div>
<div class="c r" style="left:800px;width:73px;letter-spacing:-0.107px">8.0000</div>
<div class="c r" style="left:873px;width:73px;letter-spacing:-0.109px">317.000</div>
<div class="c r" style="left:946px;width:73px;letter-spacing:-0.109px">15.2835</div>
<div class="c r" style="left:1019px;width:73px"></div>
<div class="c r" style="left:1092px;width:73px;letter-spacing:-0.107px">122.27</div>
<div class="c x" style="left:1165px;width:2px"></div>
</div>
<div class="row" style="top:153px">
<div class="c l" style="left:0px;width:67px;letter-spacing:-0.105px">11/01/2023</div>
<div class="c l" style="left:67px;width:23px;letter-spacing:-0.118px">03</div>
<div class="c l" style="left:90px;width:37px;letter-spacing:-0.477px">BE01</div>
<div class="c l" style="left:127px;width:57px;letter-spacing:-0.118px">0448570</div>
<div class="c l" style="left:184px;width:23px"></div>
<div class="c l" style="left:207px;width:37px;letter-spacing:-0.118px">001</div>
<div class="c l" style="left:244px;width:57px;letter-spacing:-0.118px">0073923</div>
<div class="c l" style="left:301px;width:253px;letter-spacing:-0.727px">LEGUA WENDY</div>
<div class="c l" style="left:554px;width:100px;letter-spacing:-0.885px">VENTA DE MERCADERIA</div>
<div class="c l" style="left:654px;width:73px;letter-spacing:-0.056px">.</div>
<div class="c r" style="left:727px;width:73px"></div>
<div class="c r" style="left:800px;width:73px;letter-spacing:-0.107px">2.0000</div>
<div class="c r" style="left:873px;width:73px;letter-spacing:-0.109px">315.000</div>
<div class="c r" style="left:946px;width:73px;letter-spacing:-0.109px">15.2835</div>
<div class="c r" style="left:1019px;width:73px"></div>
<div class="c r" style="left:1092px;width:73px;letter-spacing:-0.105px">30.57</div>
<div class="c x" style="left:1165px;width:2px"></div>
</div>
<div class="row" style="top:170px">
<div class="c l" style="left:0px;width:67px;letter-spacing:-0.105px">11/01/2023</div>
<div class="c l" style="left:67px;width:23px;letter-spacing:-0.118px">01</div>
<div class="c l" style="left:90px;width:37px;letter-spacing:-0.573px">FE01</div>
<div class="c l" style="left:127px;width:57px;letter-spacing:-0.118px">0113700</div>
<div class="c l" style="left:184px;width:23px"></div>
<div class="c l" style="left:207px;width:37px;letter-spacing:-0.118px">001</div>
<div class="c l" style="left:244px;width:57px;letter-spacing:-0.118px">0073935</div>
<div class="c l" style="left:301px;width:253px;letter-spacing:-0.708px">QUIMEX S A</div>
<div class="c l" style="left:554px;width:100px;letter-spacing:-0.885px">VENTA DE MERCADERIA</div>
<div class="c l" style="left:654px;width:73px;letter-spacing:-0.056px">.</div>
<div class="c r" style="left:727px;width:73px"></div>
<div class="c r" style="left:800px;width:73px;letter-spacing:-0.109px">16.0000</div>
<div class="c r" style="left:873px;width:73px;letter-spacing:-0.109px">299.000</div>
<div class="c r" style="left:946px;width:73px;letter-spacing:-0.109px">15.2835</div>
<div class="c r" style="left:1019px;width:73px"></div>
<div class="c r" style="left:1092px;width:73px;letter-spacing:-0.107px">244.54</div>
<div class="c x" style="left:1165px;width:2px"></div>
</div>
<div class="row" style="top:187px">
<div class="c l" style="left:0px;width:67px;letter-spacing:-0.105px">11/01/2023</div>
<div class="c l" style="left:67px;width:23px;letter-spacing:-0.118px">01</div>
<div class="c l" style="left:90px;width:37px;letter-spacing:-0.573px">FE01</div>
<div class="c l" style="left:127px;width:57px;letter-spacing:-0.118px">0113715</div>
<div class="c l" style="left:184px;width:23px"></div>
<div class="c l" style="left:207px;width:37px;letter-spacing:-0.118px">001</div>
<div class="c l" style="left:244px;width:57px;letter-spacing:-0.118px">0073941</div>
<div class="c l" style="left:301px;width:253px;letter-spacing:-0.741px">GERENCIA, INGENIERIA Y ATENCION LOGISTICA SAC</div>
<div class="c l" style="left:554px;width:100px;letter-spacing:-0.885px">VENTA DE MERCADERIA</div>
<div class="c l" style="left:654px;width:73px;letter-spacing:-0.056px">.</div>
<div class="c r" style="left:727px;width:73px"></div>
<div class="c r" style="left:800px;width:73px;letter-spacing:-0.109px">10.0000</div>
<div class="c r" style="left:873px;width:73px;letter-spacing:-0.109px">289.000</div>
<div class="c r" style="left:946px;width:73px;letter-spacing:-0.109px">15.2835</div>
<div class="c r" style="left:1019px;width:73px"></div>
<div class="c r" style="left:1092px;width:73px;letter-spacing:-0.107px">152.84</div>
<div class="c x" style="left:1165px;width:2px"></div>
</div>
<div class="row" style="top:204px">
<div class="c l" style="left:0px;width:67px;letter-spacing:-0.105px">11/01/2023</div>
<div class="c l" style="left:67px;width:23px;letter-spacing:-0.118px">01</div>
<div class="c l" style="left:90px;width:37px;letter-spacing:-0.573px">FE01</div>
<div class="c l" style="left:127px;width:57px;letter-spacing:-0.118px">0113747</div>
<div class="c l" style="left:184px;width:23px"></div>
<div class="c l" style="left:207px;width:37px"></div>
<div class="c l" style="left:244px;width:57px"></div>
<div class="c l" style="left:301px;width:253px;letter-spacing:-0.631px">FACILITADORA COMERCIAL DE SALUD S.A.C. - FACOSA</div>
<div class="c l" style="left:554px;width:100px;letter-spacing:-0.885px">VENTA DE MERCADERIA</div>
<div class="c l" style="left:654px;width:73px;letter-spacing:-0.056px">.</div>
<div class="c r" style="left:727px;width:73px"></div>
<div class="c r" style="left:800px;width:73px;letter-spacing:-0.107px">4.0000</div>
<div class="c r" style="left:873px;width:73px;letter-spacing:-0.109px">285.000</div>
<div class="c r" style="left:946px;width:73px;letter-spacing:-0.109px">15.2835</div>
<div class="c r" style="left:1019px;width:73px"></div>
<div class="c r" style="left:1092px;width:73px;letter-spacing:-0.105px">61.13</div>
<div class="c x" style="left:1165px;width:2px"></div>
</div>
<div class="row" style="top:221px">
<div class="c l" style="left:0px;width:67px;letter-spacing:-0.105px">12/01/2023</div>
<div class="c l" style="left:67px;width:23px;letter-spacing:-0.118px">01</div>
<div class="c l" style="left:90px;width:37px;letter-spacing:-0.573px">FE01</div>
<div class="c l" style="left:127px;width:57px;letter-spacing:-0.118px">0113804</div>
<div class="c l" style="left:184px;width:23px"></div>
<div class="c l" style="left:207px;width:37px;letter-spacing:-0.118px">001</div>
<div class="c l" style="left:244px;width:57px;letter-spacing:-0.118px">0073990</div>
<div class="c l" style="left:301px;width:253px;letter-spacing:-0.741px">GERENCIA, INGENIERIA Y ATENCION LOGISTICA SAC</div>
<div class="c l" style="left:554px;width:100px;letter-spacing:-0.885px">VENTA DE MERCADERIA</div>
<div class="c l" style="left:654px;width:73px;letter-spacing:-0.056px">.</div>
<div class="c r" style="left:727px;width:73px"></div>
<div class="c r" style="left:800px;width:73px;letter-spacing:-0.107px">8.0000</div>
<div class="c r" style="left:873px;width:73px;letter-spacing:-0.109px">277.000</div>
<div class="c r" style="left:946px;width:73px;letter-spacing:-0.109px">15.2835</div>
<div class="c r" style="left:1019px;width:73px"></div>
<div class="c r" style="left:1092px;width:73px;letter-spacing:-0.107px">122.27</div>
<div class="c x" style="left:1165px;width:2px"></div>
</div>
<div class="row" style="top:238px">
<div class="c l" style="left:0px;width:67px;letter-spacing:-0.105px">17/01/2023</div>
<div class="c l" style="left:67px;width:23px;letter-spacing:-0.118px">01</div>
<div class="c l" style="left:90px;width:37px;letter-spacing:-0.573px">FE01</div>
<div class="c l" style="left:127px;width:57px;letter-spacing:-0.118px">0114028</div>
<div class="c l" style="left:184px;width:23px"></div>
<div class="c l" style="left:207px;width:37px"></div>
<div class="c l" style="left:244px;width:57px"></div>
<div class="c l" style="left:301px;width:253px;letter-spacing:-0.757px">MACHUCA VILCA HENRY OMAR</div>
<div class="c l" style="left:554px;width:100px;letter-spacing:-0.885px">VENTA DE MERCADERIA</div>
<div class="c l" style="left:654px;width:73px;letter-spacing:-0.056px">.</div>
<div class="c r" style="left:727px;width:73px"></div>
<div class="c r" style="left:800px;width:73px;letter-spacing:-0.107px">5.0000</div>
<div class="c r" style="left:873px;width:73px;letter-spacing:-0.109px">272.000</div>
<div class="c r" style="left:946px;width:73px;letter-spacing:-0.109px">15.2835</div>
<div class="c r" style="left:1019px;width:73px"></div>
<div class="c r" style="left:1092px;width:73px;letter-spacing:-0.105px">76.42</div>
<div class="c x" style="left:1165px;width:2px"></div>
</div>
<div class="row" style="top:255px">
<div class="c l" style="left:0px;width:67px;letter-spacing:-0.105px">18/01/2023</div>
<div class="c l" style="left:67px;width:23px;letter-spacing:-0.118px">01</div>
<div class="c l" style="left:90px;width:37px;letter-spacing:-0.573px">FE01</div>
<div class="c l" style="left:127px;width:57px;letter-spacing:-0.118px">0114153</div>
<div class="c l" style="left:184px;width:23px"></div>
<div class="c l" style="left:207px;width:37px"></div>
<div class="c l" style="left:244px;width:57px"></div>
<div class="c l" style="left:301px;width:253px;letter-spacing:-0.741px">GERENCIA, INGENIERIA Y ATENCION LOGISTICA SAC</div>
<div class="c l" style="left:554px;width:100px;letter-spacing:-0.885px">VENTA DE MERCADERIA</div>
<div class="c l" style="left:654px;width:73px;letter-spacing:-0.056px">.</div>
<div class="c r" style="left:727px;width:73px"></div>
<div class="c r" style="left:800px;width:73px;letter-spacing:-0.107px">8.0000</div>
<div class="c r" style="left:873px;width:73px;letter-spacing:-0.109px">264.000</div>
<div class="c r" style="left:946px;width:73px;letter-spacing:-0.109px">15.2835</div>
<div class="c r" style="left:1019px;width:73px"></div>
<div class="c r" style="left:1092px;width:73px;letter-spacing:-0.107px">122.27</div>
<div class="c x" style="left:1165px;width:2px"></div>
</div>
<div class="row" style="top:272px">
<div class="c l" style="left:0px;width:67px;letter-spacing:-0.105px">20/01/2023</div>
<div class="c l" style="left:67px;width:23px;letter-spacing:-0.118px">01</div>
<div class="c l" style="left:90px;width:37px;letter-spacing:-0.573px">FE01</div>
<div class="c l" style="left:127px;width:57px;letter-spacing:-0.118px">0114303</div>
<div class="c l" style="left:184px;width:23px;letter-spacing:-0.118px">09</div>
<div class="c l" style="left:207px;width:37px;letter-spacing:-0.448px">TE01</div>
<div class="c l" style="left:244px;width:57px;letter-spacing:-0.118px">0000069</div>
<div class="c l" style="left:301px;width:253px;letter-spacing:-0.707px">CONSTRUCTORA CONSULTORA Y SERVICIOS GENERALES</div>
<div class="c l" style="left:554px;width:100px;letter-spacing:-0.885px">VENTA DE MERCADERIA</div>
<div class="c l" style="left:654px;width:73px;letter-spacing:-0.056px">.</div>
<div class="c r" style="left:727px;width:73px"></div>
<div class="c r" style="left:800px;width:73px;letter-spacing:-0.109px">59.0000</div>
<div class="c r" style="left:873px;width:73px;letter-spacing:-0.109px">205.000</div>
<div class="c r" style="left:946px;width:73px;letter-spacing:-0.109px">15.2835</div>
<div class="c r" style="left:1019px;width:73px"></div>
<div class="c r" style="left:1092px;width:73px;letter-spacing:-0.107px">901.73</div>
<div class="c x" style="left:1165px;width:2px"></div>
</div>
<div class="row" style="top:289px">
<div class="c l" style="left:0px;width:67px;letter-spacing:-0.105px">21/01/2023</div>
<div class="c l" style="left:67px;width:23px;letter-spacing:-0.118px">01</div>
<div class="c l" style="left:90px;width:37px;letter-spacing:-0.573px">FE01</div>
<div class="c l" style="left:127px;width:57px;letter-spacing:-0.118px">0114343</div>
<div class="c l" style="left:184px;width:23px"></div>
<div class="c l" style="left:207px;width:37px;letter-spacing:-0.118px">001</div>
<div class="c l" style="left:244px;width:57px;letter-spacing:-0.118px">0074851</div>
<div class="c l" style="left:301px;width:253px;letter-spacing:-0.632px">ACINOX CENTER ALATA E.I.R.L.</div>
<div class="c l" style="left:554px;width:100px;letter-spacing:-0.885px">VENTA DE MERCADERIA</div>
<div class="c l" style="left:654px;width:73px;letter-spacing:-0.056px">.</div>
<div class="c r" style="left:727px;width:73px"></div>
<div class="c r" style="left:800px;width:73px;letter-spacing:-0.109px">80.0000</div>
<div class="c r" style="left:873px;width:73px;letter-spacing:-0.109px">125.000</div>
<div class="c r" style="left:946px;width:73px;letter-spacing:-0.109px">15.2835</div>
<div class="c r" style="left:1019px;width:73px"></div>
<div class="c r" style="left:1092px;width:73px;letter-spacing:-0.102px">1,222.68</div>
<div class="c x" style="left:1165px;width:2px"></div>
</div>
<div class="row" style="top:306px">
<div class="c l" style="left:0px;width:67px;letter-spacing:-0.105px">24/01/2023</div>
<div class="c l" style="left:67px;width:23px;letter-spacing:-0.118px">01</div>
<div class="c l" style="left:90px;width:37px;letter-spacing:-0.573px">FE01</div>
<div class="c l" style="left:127px;width:57px;letter-spacing:-0.118px">0114463</div>
<div class="c l" style="left:184px;width:23px"></div>
<div class="c l" style="left:207px;width:37px"></div>
<div class="c l" style="left:244px;width:57px"></div>
<div class="c l" style="left:301px;width:253px;letter-spacing:-0.686px">SILVA VEGA DICTINIO</div>
<div class="c l" style="left:554px;width:100px;letter-spacing:-0.885px">VENTA DE MERCADERIA</div>
<div class="c l" style="left:654px;width:73px;letter-spacing:-0.056px">.</div>
<div class="c r" style="left:727px;width:73px"></div>
<div class="c r" style="left:800px;width:73px;letter-spacing:-0.107px">1.0000</div>
<div class="c r" style="left:873px;width:73px;letter-spacing:-0.109px">124.000</div>
<div class="c r" style="left:946px;width:73px;letter-spacing:-0.109px">15.2835</div>
<div class="c r" style="left:1019px;width:73px"></div>
<div class="c r" style="left:1092px;width:73px;letter-spacing:-0.105px">15.28</div>
<div class="c x" style="left:1165px;width:2px"></div>
</div>
<div class="row" style="top:323px">
<div class="c l" style="left:0px;width:67px;letter-spacing:-0.105px">25/01/2023</div>
<div class="c l" style="left:67px;width:23px;letter-spacing:-0.118px">09</div>
<div class="c l" style="left:90px;width:37px;letter-spacing:-0.118px">002</div>
<div class="c l" style="left:127px;width:57px;letter-spacing:-0.584px">25ENE23</div>
<div class="c l" style="left:184px;width:23px"></div>
<div class="c l" style="left:207px;width:37px"></div>
<div class="c l" style="left:244px;width:57px"></div>
<div class="c l" style="left:301px;width:253px;letter-spacing:-0.674px">CORPORACION MASIDER S.A.C.</div>
<div class="c l" style="left:554px;width:100px;letter-spacing:-0.871px">COMPRA DE MERCADERIA</div>
<div class="c l" style="left:654px;width:73px;letter-spacing:-0.056px">.</div>
<div class="c r" style="left:727px;width:73px;letter-spacing:-0.11px">183.0000</div>
<div class="c r" style="left:800px;width:73px"></div>
<div class="c r" style="left:873px;width:73px;letter-spacing:-0.109px">307.000</div>
<div class="c r" style="left:946px;width:73px;letter-spacing:-0.109px">14.7761</div>
<div class="c r" style="left:1019px;width:73px;letter-spacing:-0.102px">2,641.09</div>
<div class="c r" style="left:1092px;width:73px"></div>
<div class="c x" style="left:1165px;width:2px"></div>
</div>
<div class="row" style="top:340px">
<div class="c l" style="left:0px;width:67px;letter-spacing:-0.105px">26/01/2023</div>
<div class="c l" style="left:67px;width:23px;letter-spacing:-0.118px">03</div>
<div class="c l" style="left:90px;width:37px;letter-spacing:-0.477px">BE01</div>
<div class="c l" style="left:127px;width:57px;letter-spacing:-0.118px">0449053</div>
<div class="c l" style="left:184px;width:23px"></div>
<div class="c l" style="left:207px;width:37px"></div>
<div class="c l" style="left:244px;width:57px"></div>
<div class="c l" style="left:301px;width:253px;letter-spacing:-0.749px">CAYO ALEGRE ERASMO</div>
<div class="c l" style="left:554px;width:100px;letter-spacing:-0.885px">VENTA DE MERCADERIA</div>
<div class="c l" style="left:654px;width:73px;letter-spacing:-0.056px">.</div>
<div class="c r" style="left:727px;width:73px"></div>
<div class="c r" style="left:800px;width:73px;letter-spacing:-0.107px">2.0000</div>
<div class="c r" style="left:873px;width:73px;letter-spacing:-0.109px">305.000</div>
<div class="c r" style="left:946px;width:73px;letter-spacing:-0.109px">14.7761</div>
<div class="c r" style="left:1019px;width:73px"></div>
<div class="c r" style="left:1092px;width:73px;letter-spacing:-0.105px">29.55</div>
<div class="c x" style="left:1165px;width:2px"></div>
</div>
</div>
<div id="vs"><svg width="17" height="355"><path d="M5 11.500l3.500-3.500 3.500 3.500" fill="none" stroke="#606060" stroke-width="2"/><rect x="1" y="17" width="15" height="17" fill="#cdcdcd"/><path d="M5 344.500l3.500 3.500 3.500-3.500" fill="none" stroke="#606060" stroke-width="2"/></svg></div>
<div id="hs"><svg width="1167" height="17"><path d="M10.500 5l-3.500 3.500 3.500 3.500" fill="none" stroke="#606060" stroke-width="2"/><rect x="17" y="1" width="17" height="15" fill="#cdcdcd"/><path d="M1157.500 5l3.500 3.500-3.500 3.500" fill="none" stroke="#606060" stroke-width="2"/></svg></div>

</div>
<div class="tl" style="left:380px;top:630px;color:#000080;letter-spacing:-.6px">SUB TOTAL MOVIMIENTO</div>
<div class="tl" style="left:380px;top:650px;color:#000080;letter-spacing:-.65px">TOTAL GENERAL</div>
<div class="tl" style="left:380px;top:667px;color:#f00;letter-spacing:-.45px">RESUMEN STOCK (Equivalencia)</div>
<div class="tv" style="left:585px;top:667px;box-shadow:none;background:none;width:90px;text-align:left;line-height:17px;letter-spacing:-.4px">-126.000 UNID.</div>
<div class="tv" style="left:548px;top:628px">3,984.000</div>
<div class="tv" style="left:630px;top:628px">4,499.000</div>
<div class="tv" style="left:548px;top:646px">26,043.500</div>
<div class="tv" style="left:630px;top:646px">26,169.500</div>
<div class="tv" style="left:712px;top:646px">-126.000</div>
<div class="tv" style="left:870px;top:628px">57,613.66</div>
<div class="tv" style="left:952px;top:628px">29,696.76</div>
<div class="tv" style="left:870px;top:646px">394,760.03</div>
<div class="tv" style="left:952px;top:646px">360,897.85</div>

</div>
</body>
</html>
